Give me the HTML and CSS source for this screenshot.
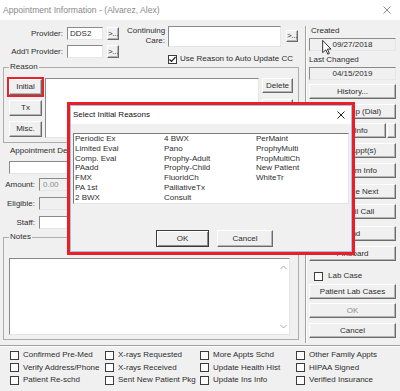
FILE: index.html
```html
<!DOCTYPE html>
<html>
<head>
<meta charset="utf-8">
<title>Appointment Information</title>
<link rel="stylesheet" href="styles.css">
</head>
<body>
<div class="window">
  <div class="titlebar">
    <span class="title">Appointment Information - (Alvarez, Alex)</span>
    <svg class="winclose" width="8" height="8" viewBox="0 0 8 8"><path d="M0.5 0.5 L7.5 7.5 M7.5 0.5 L0.5 7.5" stroke="#8a8a8a" stroke-width="1"/></svg>
  </div>

  <div class="content">
    <div class="main">
      <div class="head">
        <div class="prov">
          <div class="row">
            <span class="lbl plbl">Provider:</span>
            <span class="field pfield">DDS2</span>
            <span class="btn pick">&gt;...</span>
          </div>
          <div class="row row2">
            <span class="lbl plbl">Add'l Provider:</span>
            <span class="field pfield"></span>
            <span class="btn pick">&gt;...</span>
          </div>
        </div>
        <div class="cc">
          <div class="ccrow">
            <span class="lbl cclbl">Continuing<br>Care:</span>
            <span class="field ccfield"></span>
            <span class="btn pick ccpick">&gt;...</span>
          </div>
          <div class="check ccheck">
            <span class="box"><svg width="7" height="7" viewBox="0 0 7 7"><path d="M0.5 3.5 L2.5 5.5 L6.5 1" fill="none" stroke="#222" stroke-width="1.2"/></svg></span>
            Use Reason to Auto Update CC
          </div>
        </div>
      </div>

      <fieldset class="group reason">
        <legend>Reason</legend>
        <div class="reason-body">
          <div class="rbtns">
            <span class="btn rbtn hilite">Initial</span>
            <span class="btn rbtn">Tx</span>
            <span class="btn rbtn">Misc.</span>
          </div>
          <div class="field rtext"></div>
          <div class="rside">
            <span class="btn rsbtn">Delete</span>
            <span class="btn rsbtn">Edit</span>
          </div>
        </div>
      </fieldset>

      <div class="desc-lbl">Appointment Description</div>
      <div class="field desc"></div>
      <div class="frow first"><span class="lbl flbl">Amount:</span><span class="field dis amount">0.00</span></div>
      <div class="frow"><span class="lbl flbl">Eligible:</span><span class="field dis"></span></div>
      <div class="frow"><span class="lbl flbl">Staff:</span><span class="field"></span></div>

      <fieldset class="group notes">
        <legend>Notes</legend>
        <div class="field ntext">
          <div class="nscroll">
            <svg width="7" height="5" viewBox="0 0 7 5"><path d="M0.5 4 L3.5 1 L6.5 4" fill="none" stroke="#a6a6a6" stroke-width="1"/></svg>
            <svg width="7" height="5" viewBox="0 0 7 5"><path d="M0.5 1 L3.5 4 L6.5 1" fill="none" stroke="#a6a6a6" stroke-width="1"/></svg>
          </div>
        </div>
      </fieldset>
    </div>

    <div class="side">
      <div class="slbl">Created</div>
      <div class="field sfield">09/27/2018</div>
      <div class="slbl changed">Last Changed</div>
      <div class="field sfield">04/15/2019</div>
      <span class="btn sbtn history">History...</span>
      <span class="btn sbtn m5">Pt Lookup (Dial)</span>
      <div class="srow m4">
        <span class="btn sbtn info">Patient Info</span>
        <span class="btn mini"></span>
      </div>
      <span class="btn sbtn m5">Other Appt(s)</span>
      <span class="btn sbtn m5">Ins Claim Info</span>
      <span class="btn sbtn m6">Schedule Next</span>
      <span class="btn sbtn m5">Wait 'Til Call</span>
      <span class="btn sbtn m7">Find</span>
      <span class="btn sbtn m5">Pinboard</span>
      <div class="check labcase"><span class="box"></span>Lab Case</div>
      <span class="btn sbtn m3">Patient Lab Cases</span>
      <span class="btn sbtn m4 disabled">OK</span>
      <span class="btn sbtn m5">Cancel</span>
    </div>
  </div>

  <div class="bottom">
    <div class="check"><span class="box"></span>Confirmed Pre-Med</div>
    <div class="check"><span class="box"></span>Verify Address/Phone</div>
    <div class="check"><span class="box"></span>Patient Re-schd</div>
    <div class="check"><span class="box"></span>X-rays Requested</div>
    <div class="check"><span class="box"></span>X-rays Received</div>
    <div class="check"><span class="box"></span>Sent New Patient Pkg</div>
    <div class="check"><span class="box"></span>More Appts Schd</div>
    <div class="check"><span class="box"></span>Update Health Hist</div>
    <div class="check"><span class="box"></span>Update Ins Info</div>
    <div class="check"><span class="box"></span>Other Family Appts</div>
    <div class="check"><span class="box"></span>HIPAA Signed</div>
    <div class="check"><span class="box"></span>Verified Insurance</div>
  </div>

  <!-- modal dialog, highlighted -->
  <div class="dialog">
    <div class="dlg-frame">
      <div class="dlg-title">
        <span>Select Initial Reasons</span>
        <svg class="dlg-close" width="8" height="8" viewBox="0 0 8 8"><path d="M0.5 0.5 L7.5 7.5 M7.5 0.5 L0.5 7.5" stroke="#222" stroke-width="1"/></svg>
      </div>
      <div class="listbox">
        <span>Periodic Ex</span>
        <span>Limited Eval</span>
        <span>Comp. Eval</span>
        <span>PAadd</span>
        <span>FMX</span>
        <span>PA 1st</span>
        <span>2 BWX</span>
        <span>4 BWX</span>
        <span>Pano</span>
        <span>Prophy-Adult</span>
        <span>Prophy-Child</span>
        <span>FluoridCh</span>
        <span>PalliativeTx</span>
        <span>Consult</span>
        <span>PerMaint</span>
        <span>ProphyMulti</span>
        <span>PropMultiCh</span>
        <span>New Patient</span>
        <span>WhiteTr</span>
      </div>
      <div class="dlg-btns">
        <span class="btn dbtn default">OK</span>
        <span class="btn dbtn cancel">Cancel</span>
      </div>
    </div>
  </div>

  <svg class="cursor" width="10" height="15" viewBox="0 0 12 19"><path d="M0.5 0.5 L0.5 16 L4.5 12.5 L7 18 L9 17 L6.5 11.5 L11 11.5 Z" fill="#fff" stroke="#000" stroke-width="1"/></svg>
</div>
</body>
</html>
```

FILE: styles.css
```css
* {
  box-sizing: border-box;
}

body {
  margin: 0;
  font-family: "Liberation Sans", Arial, sans-serif;
  font-size: 8px;
  line-height: 10px;
  color: #2e2e2e;
  background: #f0f0f0;
}

.window {
  position: relative;
  width: 400px;
  height: 391px;
  background: #f0f0f0;
  overflow: hidden;
}

/* title bar */
.titlebar {
  height: 20px;
  background: #fff;
  display: flex;
  align-items: center;
  padding-left: 3px;
}
.title {
  font-size: 8.6px;
  color: #8a8a8a;
}
.winclose {
  margin-left: auto;
  margin-right: 9px;
}

/* common controls */
.field {
  display: block;
  height: 13px;
  background: #fff;
  border: 1px solid;
  border-color: #8a8a8a #e6e6e6 #e6e6e6 #8a8a8a;
  padding-left: 2px;
  line-height: 11px;
}
.field.dis {
  background: #f0f0f0;
  color: #8c8c8c;
}
.btn {
  display: flex;
  align-items: center;
  justify-content: center;
  background: #f0f0f0;
  border: 1px solid;
  border-color: #fff #6b6b6b #6b6b6b #fff;
  box-shadow: inset -1px -1px #b4b4b4;
  white-space: nowrap;
  overflow: hidden;
}
.lbl {
  display: block;
  text-align: right;
}
.check {
  display: flex;
  align-items: center;
  height: 10px;
  white-space: nowrap;
}
.box {
  display: flex;
  align-items: center;
  justify-content: center;
  width: 9px;
  height: 9px;
  background: #fff;
  border: 1px solid #3c3c3c;
  margin-right: 4px;
  flex: none;
}

/* layout */
.content {
  display: flex;
  height: 325px;
}
.main {
  width: 305px;
}

.head {
  display: flex;
  height: 42px;
  padding-top: 6px;
}
.prov {
  margin-top: 1px;
}
.row {
  display: flex;
  height: 13px;
}
.row2 {
  margin-top: 5px;
}
.plbl {
  width: 67px;
  padding-right: 4px;
  line-height: 13px;
}
.pfield {
  width: 36px;
}
.pick {
  width: 12px;
  height: 13px;
  margin-left: 4px;
  letter-spacing: -0.3px;
}

.cc {
  margin-left: 8px;
}
.ccrow {
  display: flex;
}
.cclbl {
  width: 38px;
}
.ccfield {
  width: 113px;
  height: 21px;
  margin-left: 3px;
}
.ccpick {
  margin-left: 5px;
  margin-top: 4px;
  height: 12px;
}
.ccheck {
  margin-left: 41px;
  margin-top: 7px;
}
.ccheck .box {
  margin-right: 3px;
}

/* group boxes */
.group {
  margin: 0 0 0 3px;
  width: 296px;
  min-width: 0;
  border: 1px solid #adadad;
  padding: 6px 5px 4px 5px;
}
.group legend {
  padding: 0 1px;
  line-height: 10px;
}

.reason-body {
  display: flex;
  height: 60px;
}
.rbtns {
  width: 33px;
  display: flex;
  flex-direction: column;
}
.rbtn {
  height: 16px;
  margin-top: 5px;
}
.rbtn.hilite {
  margin-top: 1px;
  outline: 2px solid #e8222a;
}
.rtext {
  width: 214px;
  height: 60px;
  margin-left: 3px;
}
.rside {
  width: 31px;
  margin-left: 3px;
}
.rsbtn {
  height: 15px;
  margin-bottom: 6px;
}

.desc-lbl {
  margin: 3px 0 0 10px;
}
.desc {
  width: 150px;
  margin: 5px 0 0 9px;
}
.frow {
  display: flex;
  margin-top: 6px;
}
.frow.first {
  margin-top: 4px;
}
.flbl {
  width: 35px;
  line-height: 13px;
}
.frow .field {
  width: 90px;
  margin-left: 4px;
}
.amount {
  padding-left: 3px;
}

.notes {
  margin-top: 3px;
  padding-top: 16px;
}
.ntext {
  width: 281px;
  height: 77px;
  display: flex;
  justify-content: flex-end;
}
.nscroll {
  width: 10px;
  display: flex;
  flex-direction: column;
  justify-content: space-between;
  align-items: center;
  padding: 6px 0 5px;
  margin-right: 1px;
}

/* right column */
.side {
  width: 95px;
  height: 317px;
  margin-top: 6px;
  border-left: 1px solid #a0a0a0;
  box-shadow: inset 1px 0 #fff;
  padding: 0 4px 0 3px;
  display: flex;
  flex-direction: column;
}
.slbl {
  padding-left: 2px;
}
.slbl.changed {
  margin-top: 4px;
  padding-left: 0;
}
.sfield {
  margin-top: 2px;
  background: #f0f0f0;
  text-align: center;
  padding-left: 0;
}
.sbtn {
  height: 15px;
  flex: none;
}
.history {
  margin-top: 4px;
}
.m3 { margin-top: 3px; }
.m4 { margin-top: 4px; }
.m5 { margin-top: 5px; }
.m6 { margin-top: 6px; }
.m7 { margin-top: 7px; }
.srow {
  display: flex;
  height: 15px;
}
.info {
  width: 77px;
}
.mini {
  width: 9px;
  height: 15px;
  margin-left: 1px;
}
.labcase {
  margin: 10px 0 0 5px;
}
.labcase .box {
  margin-right: 5px;
}
.disabled {
  color: #8c8c8c;
}

/* bottom checkboxes */
.bottom {
  height: 46px;
  border-top: 1px solid #a0a0a0;
  box-shadow: inset 0 1px #fff;
  padding: 3px 0 0 10px;
  display: grid;
  grid-template-columns: 95px 95px 96px auto;
  grid-template-rows: repeat(3, 12.5px);
  grid-auto-flow: column;
  align-items: center;
}

/* dialog */
.dialog {
  position: absolute;
  left: 67px;
  top: 102px;
  width: 288px;
  height: 153px;
  border: 3px solid #ea1f26;
  background: #f0f0f0;
}
.dlg-frame {
  height: 100%;
  border: 1px solid #a8bde2;
}
.dlg-title {
  height: 18px;
  background: #fff;
  display: flex;
  align-items: center;
  padding-left: 2px;
  color: #111;
}
.dlg-close {
  margin-left: auto;
  margin-right: 6px;
}
.listbox {
  width: 276px;
  height: 71px;
  margin: 9px 0 0 2px;
  background: #fff;
  border: 1px solid;
  border-color: #7a7a7a #e3e3e3 #e3e3e3 #7a7a7a;
  padding-left: 1px;
  display: grid;
  grid-template-columns: 89px 92px auto;
  grid-template-rows: repeat(7, 9.8px);
  grid-auto-flow: column;
  line-height: 9.8px;
}
.dlg-btns {
  display: flex;
  margin-top: 26px;
}
.dbtn {
  height: 17px;
}
.dbtn.default {
  width: 53px;
  margin-left: 85px;
  border-color: #3a3a3a;
  box-shadow: inset 1px 1px #fff, inset -1px -1px #8a8a8a;
}
.dbtn.cancel {
  width: 56px;
  margin-left: 8px;
}

.cursor {
  position: absolute;
  left: 322px;
  top: 40px;
}
```
